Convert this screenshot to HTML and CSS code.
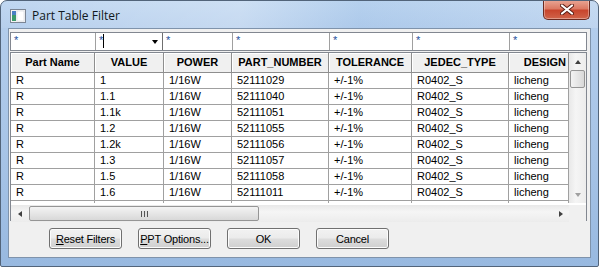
FILE: index.html
```html
<!DOCTYPE html>
<html lang="en">

<head>
  <meta charset="UTF-8">
  <title>Part Table Filter</title>
  <link rel="stylesheet" href="styles.css">
</head>

<body>
  <div class="window">
    <div class="titlebar">
      <svg class="app-icon" width="16" height="14" viewBox="0 0 16 14">
        <rect x="0.5" y="0.5" width="15" height="13" fill="#f4f4f4" stroke="#7b8594"/>
        <rect x="2" y="2" width="4" height="10" fill="#3b9a6b"/>
        <rect x="2" y="2" width="4" height="4" fill="#4a7fc4"/>
        <rect x="7" y="2" width="7" height="10" fill="#ffffff" stroke="#c9ced6" stroke-width="0.5"/>
      </svg>
      <span class="title">Part Table Filter</span>
      <div class="close-btn">
        <svg width="14" height="11" viewBox="0 0 14 11">
          <path d="M2 1.5 L12 9.5 M12 1.5 L2 9.5" stroke="#5a1d14" stroke-width="4" stroke-linecap="round"/>
          <path d="M2 1.5 L12 9.5 M12 1.5 L2 9.5" stroke="#ffffff" stroke-width="2.2" stroke-linecap="round"/>
        </svg>
      </div>
    </div>

    <div class="client">
      <div class="filter-row">
        <div class="fcell f1">*</div>
        <div class="fcell f2 combo">
          <span>*</span><span class="caret"></span>
          <span class="drop-arrow"></span>
        </div>
        <div class="fcell f3">*</div>
        <div class="fcell f4">*</div>
        <div class="fcell f5">*</div>
        <div class="fcell f6">*</div>
        <div class="fcell f7">*</div>
      </div>

      <div class="grid">
        <div class="grid-main">
          <div class="cells">
            <div class="row head">
              <div>Part Name</div><div>VALUE</div><div>POWER</div><div>PART_NUMBER</div>
              <div>TOLERANCE</div><div>JEDEC_TYPE</div><div class="clip">DESIGN</div>
            </div>
            <div class="row">
              <div>R</div><div>1</div><div>1/16W</div><div>52111029</div><div>+/-1%</div><div>R0402_S</div><div>licheng</div>
            </div>
            <div class="row">
              <div>R</div><div>1.1</div><div>1/16W</div><div>52111040</div><div>+/-1%</div><div>R0402_S</div><div>licheng</div>
            </div>
            <div class="row">
              <div>R</div><div>1.1k</div><div>1/16W</div><div>52111051</div><div>+/-1%</div><div>R0402_S</div><div>licheng</div>
            </div>
            <div class="row">
              <div>R</div><div>1.2</div><div>1/16W</div><div>52111055</div><div>+/-1%</div><div>R0402_S</div><div>licheng</div>
            </div>
            <div class="row">
              <div>R</div><div>1.2k</div><div>1/16W</div><div>52111056</div><div>+/-1%</div><div>R0402_S</div><div>licheng</div>
            </div>
            <div class="row">
              <div>R</div><div>1.3</div><div>1/16W</div><div>52111057</div><div>+/-1%</div><div>R0402_S</div><div>licheng</div>
            </div>
            <div class="row">
              <div>R</div><div>1.5</div><div>1/16W</div><div>52111058</div><div>+/-1%</div><div>R0402_S</div><div>licheng</div>
            </div>
            <div class="row">
              <div>R</div><div>1.6</div><div>1/16W</div><div>52111011</div><div>+/-1%</div><div>R0402_S</div><div>licheng</div>
            </div>
            <div class="row">
              <div></div><div></div><div></div><div></div><div></div><div></div><div></div>
            </div>
          </div>
          <div class="vscroll">
            <div class="arrow-box"><span class="tri-up"></span></div>
            <div class="vthumb"></div>
            <div class="vtrack"></div>
            <div class="arrow-box"><span class="tri-down"></span></div>
          </div>
        </div>
        <div class="grid-foot">
          <div class="hscroll">
            <div class="arrow-box"><span class="tri-left"></span></div>
            <div class="hthumb"><span class="grip"></span></div>
            <div class="htrack"></div>
            <div class="arrow-box"><span class="tri-right"></span></div>
          </div>
          <div class="corner"></div>
        </div>
      </div>

      <div class="buttons">
        <button><u>R</u>eset Filters</button>
        <button><u>P</u>PT Options...</button>
        <button>OK</button>
        <button>Cancel</button>
      </div>
    </div>
  </div>
</body>
</html>
```

FILE: styles.css
```css
body {
  margin: 0;
  background: #ffffff;
  font-family: "Liberation Sans", Arial, sans-serif;
  font-size: 11px;
}
.window {
  width: 599px;
  height: 267px;
  box-sizing: border-box;
  border: 1px solid #52647a;
  border-radius: 7px 7px 2px 2px;
  background: linear-gradient(180deg, #bdd5f0 0%, #b3cdec 10%, #a6c3e6 60%, #98b9e0 100%);
  display: flex;
  flex-direction: column;
  padding-bottom: 8px;
  overflow: hidden;
}
.titlebar {
  height: 27px;
  display: flex;
  align-items: center;
  padding-left: 9px;
  background: linear-gradient(90deg, rgba(255,255,255,0.05), rgba(255,255,255,0.25) 40%, rgba(120,170,220,0.1) 60%, rgba(255,255,255,0.15));
}
.app-icon {
  margin-right: 6px;
  margin-top: 2px;
}
.title {
  font-family: "Open Sans", "Noto Sans", sans-serif;
  font-size: 12px;
  color: #101820;
  margin-top: 1px;
}
.close-btn {
  margin-left: auto;
  margin-right: 8px;
  align-self: flex-start;
  margin-top: -1px;
  width: 45px;
  height: 19px;
  border: 1px solid #6b2a20;
  border-top: none;
  border-radius: 0 0 5px 5px;
  background: linear-gradient(180deg, #e9a796 0%, #dc7a64 45%, #c8452d 55%, #d0644a 100%);
  box-shadow: inset 0 0 0 1px rgba(255,255,255,0.35);
  display: flex;
  align-items: center;
  justify-content: center;
}
.client {
  flex: 1;
  margin: 0 7px;
  border: 1px solid #7f93ab;
  background: #f0f0f0;
  padding: 3px 3px 0 1px;
  display: flex;
  flex-direction: column;
}

/* filter row */
.filter-row {
  display: flex;
  height: 19px;
  box-sizing: border-box;
  border: 1px solid #828790;
  background: #ffffff;
}
.fcell {
  box-sizing: border-box;
  border-right: 1px solid #a0a0a0;
  color: #1f4f9c;
  padding: 1px 0 0 3px;
  line-height: 12px;
  position: relative;
}
.f1 { width: 85px; }
.f2 { width: 67px; }
.f3 { width: 70px; }
.f4 { width: 97px; }
.f5 { width: 83px; }
.f6 { width: 97px; }
.f7 { width: 74px; border-right: none; }
.combo {
  display: flex;
  align-items: flex-start;
  border-right-color: #6f6f6f;
}
.caret {
  width: 1px;
  height: 14px;
  background: #000;
  margin-left: 0;
}
.drop-arrow {
  position: absolute;
  right: 4px;
  top: 7px;
  border-left: 3.5px solid transparent;
  border-right: 3.5px solid transparent;
  border-top: 4px solid #000;
}

/* grid */
.grid {
  margin-top: 1px;
  height: 169px;
  box-sizing: border-box;
  border: 1px solid #828790;
  background: #ffffff;
  display: flex;
  flex-direction: column;
}
.grid-main {
  display: flex;
  height: 150px;
}
.cells {
  width: 558px;
  overflow: hidden;
}
.row {
  display: grid;
  grid-template-columns: 84px 69px 68px 97px 83px 97px 60px;
  height: 16px;
}
.row > div {
  box-sizing: border-box;
  border-right: 1px solid #a0a0a0;
  border-bottom: 1px solid #a0a0a0;
  padding-left: 5px;
  line-height: 15px;
  white-space: nowrap;
  overflow: hidden;
  color: #000;
}
.row.head {
  height: 20px;
}
.row.head > div {
  background: #f0f0f0;
  font-weight: bold;
  text-align: center;
  padding-left: 0;
  line-height: 19px;
  border-right-color: #8e8e8e;
  border-bottom-color: #8e8e8e;
  box-shadow: inset 1px 1px 0 #ffffff;
}
.row.head > .clip {
  text-align: right;
  padding-right: 2px;
}

/* scrollbars */
.vscroll {
  width: 17px;
  display: flex;
  flex-direction: column;
  background: linear-gradient(90deg, #e8e8e8, #f5f5f5 40%, #ececec);
}
.arrow-box {
  width: 17px;
  height: 17px;
  display: flex;
  align-items: center;
  justify-content: center;
  flex: none;
}
.tri-up {
  border-left: 3.5px solid transparent;
  border-right: 3.5px solid transparent;
  border-bottom: 4px solid #404040;
}
.tri-down {
  border-left: 3.5px solid transparent;
  border-right: 3.5px solid transparent;
  border-top: 4px solid #a0a0a0;
}
.tri-left {
  border-top: 3.5px solid transparent;
  border-bottom: 3.5px solid transparent;
  border-right: 4px solid #404040;
}
.tri-right {
  border-top: 3.5px solid transparent;
  border-bottom: 3.5px solid transparent;
  border-left: 4px solid #404040;
}
.vthumb {
  height: 18px;
  margin: 0 1px;
  box-sizing: border-box;
  border: 1px solid #959595;
  border-radius: 2px;
  background: linear-gradient(90deg, #f3f3f3, #e6e6e6 50%, #d8d8d8);
}
.vtrack {
  flex: 1;
}
.grid-foot {
  display: flex;
  height: 17px;
  margin-top: 2px;
}
.hscroll {
  width: 558px;
  display: flex;
  background: linear-gradient(180deg, #e8e8e8, #f5f5f5 40%, #ececec);
}
.hthumb {
  width: 230px;
  margin: 1px 0 1px 1px;
  box-sizing: border-box;
  border: 1px solid #959595;
  border-radius: 2px;
  background: linear-gradient(180deg, #f3f3f3, #e6e6e6 50%, #d8d8d8);
  display: flex;
  align-items: center;
  justify-content: center;
}
.grip {
  width: 7px;
  height: 6px;
  background: repeating-linear-gradient(90deg, #555 0 1px, #e0e0e0 1px 3px);
}
.htrack {
  flex: 1;
}
.corner {
  width: 17px;
  background: #f0f0f0;
}

/* buttons */
.buttons {
  display: flex;
  gap: 16px;
  margin-top: 7px;
  padding-left: 39px;
}
.buttons button {
  width: 73px;
  height: 21px;
  padding: 0;
  white-space: nowrap;
  font-family: "Liberation Sans", Arial, sans-serif;
  font-size: 11px;
  letter-spacing: -0.2px;
  color: #000;
  border: 1px solid #707070;
  border-radius: 3px;
  background: linear-gradient(180deg, #f2f2f2 0%, #ebebeb 48%, #dddddd 52%, #cfcfcf 100%);
  box-shadow: inset 0 0 0 1px #fcfcfc;
}
```
